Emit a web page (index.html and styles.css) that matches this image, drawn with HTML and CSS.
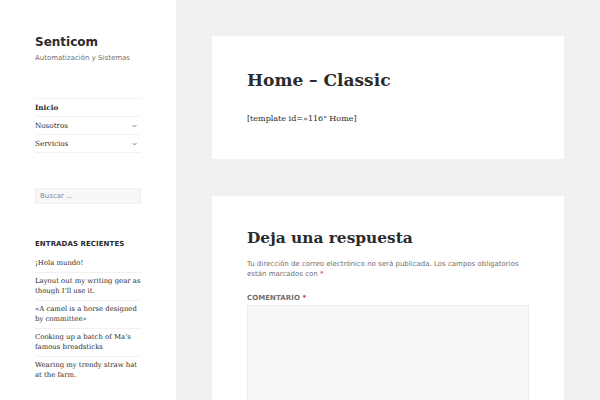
FILE: index.html
```html
<!DOCTYPE html>
<html lang="es">
<head>
<meta charset="utf-8">
<title>Senticom</title>
<link rel="stylesheet" href="styles.css">
</head>
<body>
<div class="page">
  <aside class="sidebar">
    <div class="branding">
      <div class="site-title">Senticom</div>
      <div class="site-desc">Automatización y Sistemas</div>
    </div>
    <ul class="menu">
      <li class="current">Inicio</li>
      <li>Nosotros<svg class="chev" viewBox="0 0 8 5" width="5" height="4"><path d="M1 1l3 3 3-3" fill="none" stroke="#555" stroke-width="1.2"/></svg></li>
      <li>Servicios<svg class="chev" viewBox="0 0 8 5" width="5" height="4"><path d="M1 1l3 3 3-3" fill="none" stroke="#555" stroke-width="1.2"/></svg></li>
    </ul>
    <div class="search">Buscar ...</div>
    <h2 class="widget-title">ENTRADAS RECIENTES</h2>
    <ul class="recent">
      <li>¡Hola mundo!</li>
      <li>Layout out my writing gear as though I’ll use it.</li>
      <li>«A camel is a horse designed by committee»</li>
      <li>Cooking up a batch of Ma’s famous breadsticks</li>
      <li>Wearing my trendy straw hat at the farm.</li>
    </ul>
  </aside>
  <main class="main">
    <article class="card post">
      <h1 class="post-title">Home – Classic</h1>
      <p class="post-text">[template id=»116" Home]</p>
    </article>
    <section class="card comments">
      <h3 class="reply-title">Deja una respuesta</h3>
      <p class="notes">Tu dirección de correo electrónico no será publicada. Los campos obligatorios están marcados con <span class="req">*</span></p>
      <label class="label">COMENTARIO <span class="req">*</span></label>
      <div class="textarea"></div>
    </section>
  </main>
</div>
</body>
</html>
```
FILE: styles.css
```css
* { box-sizing: border-box; }
html, body { margin: 0; padding: 0; }
body { background: #f1f1f1; color: #2b2b2b; font-family: "DejaVu Serif", serif; }
.page { display: flex; width: 600px; height: 400px; overflow: hidden; }
.sidebar { width: 176px; flex: none; background: #fff; padding: 35px 35px 0 35px; }
.site-title { font-family: "DejaVu Sans", sans-serif; font-weight: bold; font-size: 12px; line-height: 14px; color: #2b2b2b; }
.site-desc { font-family: "DejaVu Sans", sans-serif; font-size: 7px; line-height: 10px; color: #707070; margin-top: 4px; }
ul { list-style: none; margin: 0; padding: 0; }
.menu { margin-top: 35px; border-top: 1px solid #f1f1f1; }
.menu li { display: flex; justify-content: space-between; align-items: center; font-size: 7.2px; line-height: 10px; border-bottom: 1px solid #f1f1f1; color: #2b2b2b; height: 18px; padding-right: 4px; }
.menu li.current { font-weight: bold; }
.chev { display: block; }
.search { margin-top: 35px; height: 16px; background: #f7f7f7; border: 1px solid #f1f1f1; font-family: "DejaVu Sans", sans-serif; font-size: 7px; color: #888; padding: 3px 4px; line-height: 9px; }
.widget-title { margin: 35px 0 0; font-family: "DejaVu Sans", sans-serif; font-weight: bold; font-size: 7px; letter-spacing: 0.01em; line-height: 10px; color: #2b2b2b; }
.recent { margin-top: 6px; }
.recent li { font-size: 6.9px; line-height: 9.7px; padding: 3.8px 0; border-bottom: 1px solid #f1f1f1; color: #2b2b2b; }
.recent li:last-child { border-bottom: none; }
.main { flex: 1; padding: 36px 0 0 36px; display: flex; flex-direction: column; gap: 37px; }
.card { width: 352px; background: #fff; padding: 0 35px; flex: none; }
.post { height: 123px; padding-top: 33px; }
.post-title { margin: 0; font-size: 17px; line-height: 22px; font-weight: bold; color: #2b2b2b; }
.post-text { margin: 22px 0 0; font-size: 8px; line-height: 12px; color: #2b2b2b; }
.comments { height: 220px; padding-top: 32px; }
.reply-title { margin: 0; font-size: 15.4px; line-height: 20px; font-weight: bold; color: #2b2b2b; }
.notes { margin: 11px 0 0; font-family: "DejaVu Sans", sans-serif; font-size: 7px; line-height: 10px; color: #707070; }
.req { color: #c0392b; }
.label { display: block; margin-top: 14px; font-family: "DejaVu Sans", sans-serif; font-size: 7px; font-weight: bold; letter-spacing: 0.01em; line-height: 10px; color: #707070; }
.textarea { margin-top: 2px; width: 282px; height: 120px; background: #f7f7f7; border: 1px solid #eaeaea; }
```
